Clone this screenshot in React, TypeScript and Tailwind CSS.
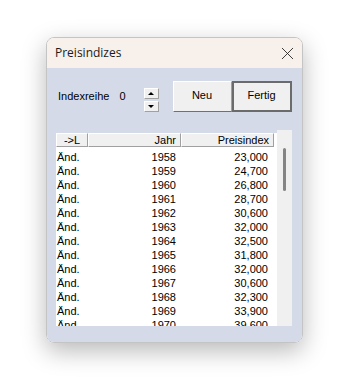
import { X } from "lucide-react";

const rows: [string, string][] = [
  ["1958", "23,000"],
  ["1959", "24,700"],
  ["1960", "26,800"],
  ["1961", "28,700"],
  ["1962", "30,600"],
  ["1963", "32,000"],
  ["1964", "32,500"],
  ["1965", "31,800"],
  ["1966", "32,000"],
  ["1967", "30,600"],
  ["1968", "32,300"],
  ["1969", "33,900"],
  ["1970", "39,600"],
  ["1971", "41,200"],
];

const raised =
  "border border-t-white border-l-white border-r-[#a0a0a0] border-b-[#a0a0a0] bg-[#f0f0f0]";

function HeaderCell({ label, className }: { label: string; className: string }) {
  return (
    <div className={`${raised} h-[14px] text-[11px] leading-[12px] px-1 ${className}`}>
      {label}
    </div>
  );
}

function Spinner() {
  return (
    <div className="flex flex-col gap-[2px]">
      <button className={`${raised} w-[15px] h-[11px] flex items-center justify-center`}>
        <span className="block w-0 h-0 border-l-[3px] border-r-[3px] border-b-[3px] border-l-transparent border-r-transparent border-b-black" />
      </button>
      <button className={`${raised} w-[15px] h-[11px] flex items-center justify-center`}>
        <span className="block w-0 h-0 border-l-[3px] border-r-[3px] border-t-[3px] border-l-transparent border-r-transparent border-t-black" />
      </button>
    </div>
  );
}

export default function App() {
  return (
    <div
      className="w-[347px] h-[391px] bg-white pt-[37px] pl-[46px] overflow-hidden"
      style={{ fontFamily: '"Liberation Sans", Arial, sans-serif' }}
    >
      <div className="w-[257px] h-[306px] rounded-[8px] border border-[#c4c4c4] overflow-hidden shadow-[0_8px_24px_rgba(0,0,0,0.28)] flex flex-col">
        <div className="h-[30px] bg-[#f8f0eb] flex items-center justify-between pl-[8px] pr-[4px]">
          <span className="text-[12px] text-[#1b1b1b]" style={{ fontFamily: '"Open Sans", "Noto Sans", sans-serif' }}>
            Preisindizes
          </span>
          <X size={21} strokeWidth={1} className="text-[#222]" />
        </div>

        <div className="flex-1 bg-[#d5dae9] flex flex-col">
          <div className="flex items-center pt-[13px] pl-[11px]">
            <span className="text-[11px] text-black">Indexreihe</span>
            <span className="text-[11px] text-black ml-[10px]">0</span>
            <div className="ml-[18px] mt-[6px]">
              <Spinner />
            </div>
            <div className="flex ml-[14px]">
              <button className="w-[59px] h-[31px] pb-[3px] border border-t-white border-l-white border-r-[#a0a0a0] border-b-[#707070] bg-[#f0f0f0] text-[11px] text-black">
                Neu
              </button>
              <button className="w-[60px] h-[31px] pb-[3px] border-2 border-[#6b6b6b] bg-[#f0f0f0] text-[11px] text-black">
                Fertig
              </button>
            </div>
          </div>

          <div className="flex ml-[9px] mt-[18px]">
            <div className="w-[221px] h-[193px] mt-[3px] bg-white overflow-hidden text-[11px] text-black">
              <div className="flex">
                <HeaderCell label="->L" className="w-[32px] text-center" />
                <HeaderCell label="Jahr" className="w-[93px] text-right" />
                <HeaderCell label="Preisindex" className="w-[93px] text-right" />
              </div>
              {rows.map(([year, value]) => (
                <div key={year} className="flex h-[14px] leading-[14px] pt-[3px]">
                  <span className="w-[32px] pl-[1px]">Änd.</span>
                  <span className="w-[88px] text-right">{year}</span>
                  <span className="w-[92px] text-right">{value}</span>
                </div>
              ))}
            </div>
            <div className="w-[15px] h-[196px] bg-[#f0f0f0] pt-[18px] pl-[6px]">
              <div className="w-[3px] h-[43px] bg-[#858585] rounded-full" />
            </div>
          </div>
        </div>
      </div>
    </div>
  );
}
